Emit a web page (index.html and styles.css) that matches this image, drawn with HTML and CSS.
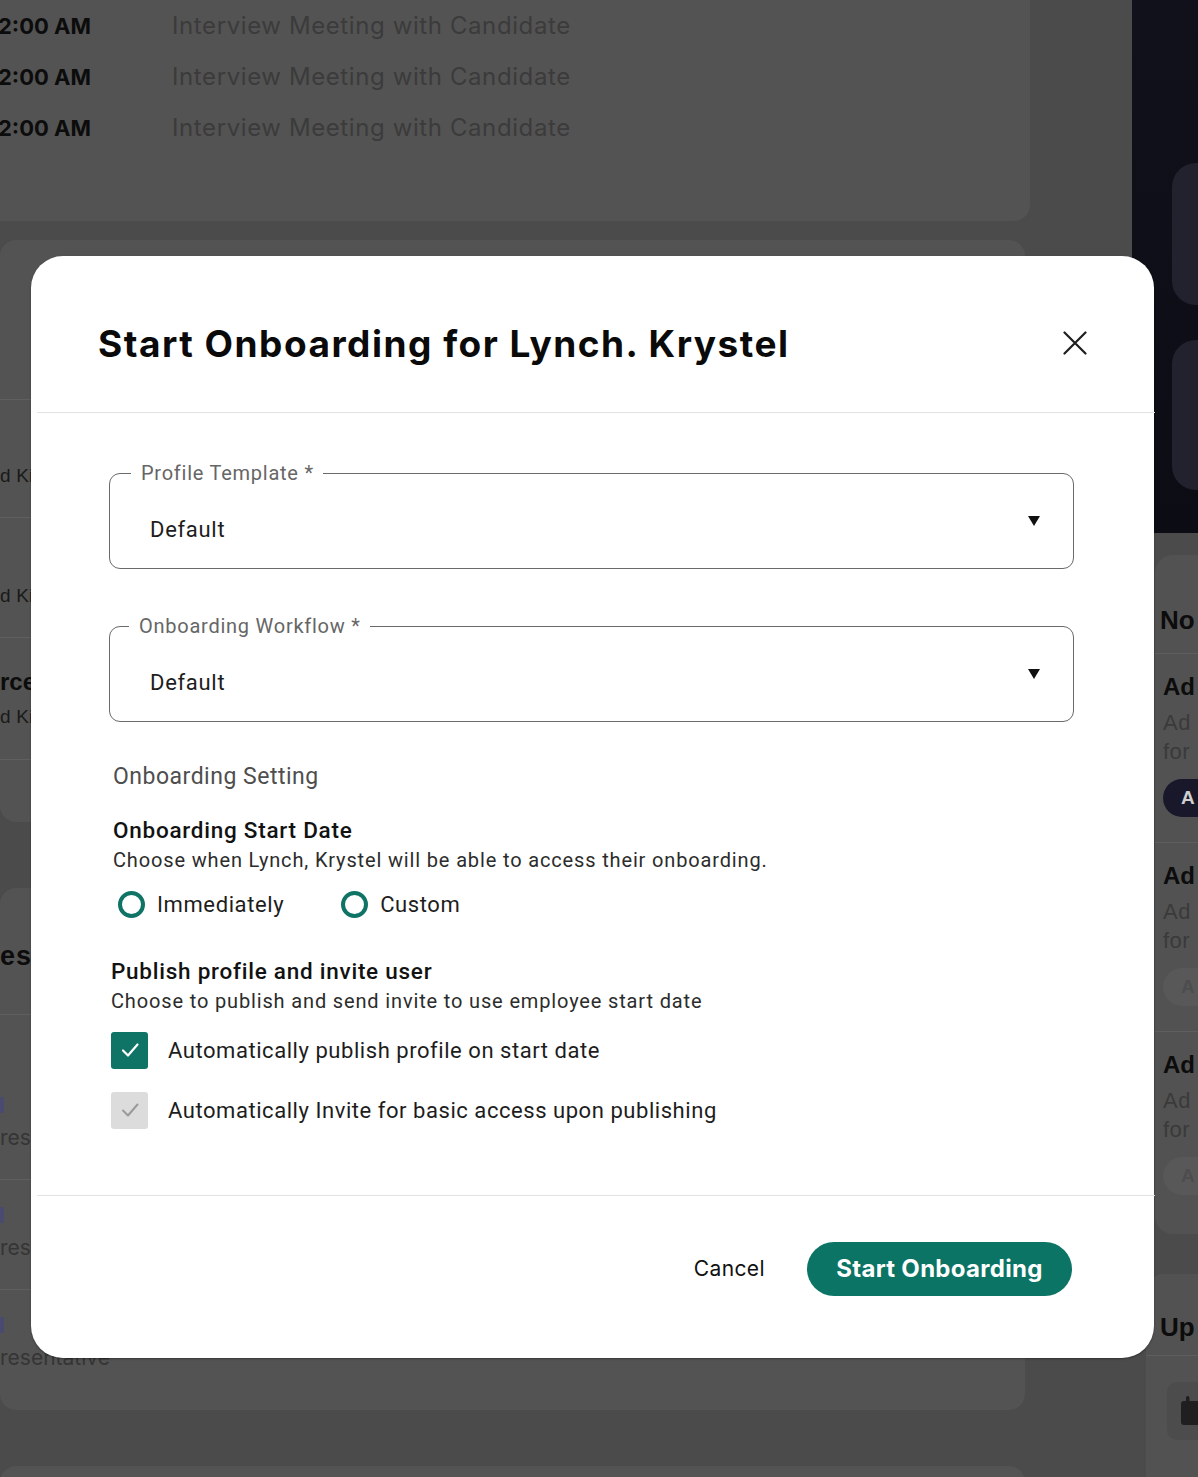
FILE: index.html
```html
<!DOCTYPE html>
<html lang="en">
<head>
<meta charset="utf-8">
<title>Start Onboarding</title>
<link rel="stylesheet" href="styles.css">
</head>
<body>
<div class="page">
  <div class="main">
    <section class="agenda">
      <div class="agenda-row"><span class="time">2:00 AM</span><span class="event">Interview Meeting with Candidate</span></div>
      <div class="agenda-row"><span class="time">2:00 AM</span><span class="event">Interview Meeting with Candidate</span></div>
      <div class="agenda-row"><span class="time">2:00 AM</span><span class="event">Interview Meeting with Candidate</span></div>
    </section>

    <section class="card card-a">
      <div class="card-head"></div>
      <div class="row r1"><div class="row-title"></div><div class="row-sub">d Ki</div></div>
      <div class="row r2"><div class="row-title"></div><div class="row-sub">d Ki</div></div>
      <div class="row r3"><div class="row-title">rce</div><div class="row-sub">d Ki</div></div>
    </section>

    <section class="card card-b">
      <div class="card-b-head"><span class="card-b-title">es</span></div>
      <div class="rep"><span class="marker"></span><span class="rep-sub">res</span></div>
      <div class="rep"><span class="marker"></span><span class="rep-sub">res</span></div>
      <div class="rep last"><span class="marker"></span><span class="rep-sub">resentative</span></div>
    </section>

    <section class="card card-c"></section>
  </div>

  <aside class="side">
    <div class="side-dark">
      <div class="side-btn"></div>
      <div class="side-btn tall"></div>
    </div>
    <div class="notes">
      <div class="notes-head">No</div>
      <div class="note">
        <div class="note-title">Ad</div>
        <div class="note-text">Ad<br>for</div>
        <div class="pill dark">A</div>
      </div>
      <div class="note">
        <div class="note-title">Ad</div>
        <div class="note-text">Ad<br>for</div>
        <div class="pill">A</div>
      </div>
      <div class="note last">
        <div class="note-title">Ad</div>
        <div class="note-text">Ad<br>for</div>
        <div class="pill">A</div>
      </div>
    </div>
    <div class="upcoming">
      <div class="notes-head up">Up</div>
      <div class="up-item">
        <svg class="cal" width="20" height="34" viewBox="0 0 20 34"><rect x="1" y="7" width="22" height="24" rx="3" fill="#1f1f1f"/><rect x="6" y="2" width="3.5" height="8" rx="1.7" fill="#1f1f1f"/></svg>
      </div>
    </div>
  </aside>
</div>

<div class="modal" role="dialog" aria-labelledby="modal-title">
  <header class="modal-head">
    <h1 id="modal-title" class="modal-title">Start Onboarding for Lynch. Krystel</h1>
    <button class="close" aria-label="Close">
      <svg width="24" height="24" viewBox="0 0 24 24"><path d="M1.5 1.5 L22.5 22.5 M22.5 1.5 L1.5 22.5" stroke="#1e1e1e" stroke-width="2.2" fill="none" stroke-linecap="round"/></svg>
    </button>
  </header>

  <div class="modal-body">
    <fieldset class="field">
      <legend class="field-label">Profile Template *</legend>
      <div class="field-inner"><span class="field-value">Default</span><span class="caret"></span></div>
    </fieldset>

    <fieldset class="field second">
      <legend class="field-label l2">Onboarding Workflow *</legend>
      <div class="field-inner"><span class="field-value">Default</span><span class="caret"></span></div>
    </fieldset>

    <div class="section-label">Onboarding Setting</div>

    <div class="group">
      <div class="group-title">Onboarding Start Date</div>
      <div class="group-desc">Choose when Lynch, Krystel will be able to access their onboarding.</div>
      <div class="radios">
        <label class="radio"><span class="radio-dot"></span>Immediately</label>
        <label class="radio"><span class="radio-dot"></span>Custom</label>
      </div>
    </div>

    <div class="group g2">
      <div class="group-title">Publish profile and invite user</div>
      <div class="group-desc">Choose to publish and send invite to use employee start date</div>
      <label class="check">
        <span class="box on"><svg width="22" height="22" viewBox="0 0 22 22"><path d="M4 11.5 L9 16.5 L18.5 5.5" stroke="#fff" stroke-width="2.2" fill="none" stroke-linecap="round" stroke-linejoin="round"/></svg></span>
        Automatically publish profile on start date
      </label>
      <label class="check c2">
        <span class="box off"><svg width="22" height="22" viewBox="0 0 22 22"><path d="M4 11.5 L9 16.5 L18.5 5.5" stroke="#9a9a9a" stroke-width="2" fill="none" stroke-linecap="round" stroke-linejoin="round"/></svg></span>
        Automatically Invite for basic access upon publishing
      </label>
    </div>
  </div>

  <footer class="modal-foot">
    <button class="btn-cancel">Cancel</button>
    <button class="btn-primary">Start Onboarding</button>
  </footer>
</div>
</body>
</html>
```

FILE: styles.css
```css
* { box-sizing: border-box; }
html, body { margin: 0; padding: 0; }
body {
  width: 1198px;
  height: 1477px;
  overflow: hidden;
  position: relative;
  background: #4b4b4b;
  font-family: Inter, "Liberation Sans", sans-serif;
}

/* ---------- dimmed background page ---------- */
.page {
  display: grid;
  grid-template-columns: 1132px 66px;
  height: 1477px;
}
.main { display: flex; flex-direction: column; }

.agenda {
  width: 1030px;
  height: 221px;
  background: #535353;
  border-radius: 0 0 16px 0;
}
.agenda-row {
  display: flex;
  align-items: center;
  height: 51px;
}
.time {
  width: 174px;
  font-weight: 700;
  font-size: 22px;
  color: #0c0c0c;
  margin-left: -2px;
}
.event {
  font-size: 24px;
  color: #3b3b3b;
  letter-spacing: 0.6px;
}

.card {
  width: 1025px;
  background: #535353;
  border-radius: 16px;
}
.card-a { margin-top: 19px; height: 582px; }
.card-head { height: 160px; border-bottom: 1px solid #5f5f5f; }
.row { height: 118px; border-bottom: 1px solid #5f5f5f; display: flex; flex-direction: column; font-family: "Liberation Sans", Arial, sans-serif; }
.row.r2 { height: 120px; }
.row.r3 { height: 122px; }
.row-title { height: 30px; font-weight: 700; font-size: 24px; color: #0c0c0c; line-height: 30px; }
.row-sub { font-size: 19px; color: #1a1a1a; line-height: 24px; letter-spacing: 0.2px; white-space: nowrap; }
.r1 .row-title { margin-top: 31px; }
.r1 .row-sub { margin-top: 3px; }
.r2 .row-title { margin-top: 33px; }
.r2 .row-sub { margin-top: 3px; }
.r3 .row-title { margin-top: 29px; }
.r3 .row-sub { margin-top: 8px; }

.card-b { margin-top: 66px; height: 522px; }
.card-b-head { height: 127px; border-bottom: 1px solid #5f5f5f; display: flex; align-items: center; padding-top: 10px; }
.card-b-title { font-family: "Liberation Sans", Arial, sans-serif; font-weight: 700; font-size: 27px; color: #0c0c0c; letter-spacing: 1px; }
.rep { height: 165px; border-bottom: 1px solid #5f5f5f; display: flex; flex-direction: column; padding-top: 82px; }
.rep + .rep { height: 110px; padding-top: 27px; }
.rep.last { border-bottom: none; height: 120px; }
.marker { width: 4px; height: 16px; background: #4a4a70; border-radius: 1px; }
.rep-sub { margin-top: 13px; font-size: 21px; color: #353535; line-height: 24px; }

.card-c { margin-top: 56px; height: 40px; }

/* right side */
.side { display: flex; flex-direction: column; }
.side-dark {
  height: 533px;
  background: linear-gradient(180deg, #11111b 0%, #0b0c14 100%);
  border-radius: 0 0 0 14px;
  padding: 163px 0 0 40px;
  display: flex;
  flex-direction: column;
  gap: 35px;
}
.side-btn { height: 142px; background: #22222e; border-radius: 24px 0 0 24px; }
.side-btn.tall { height: 150px; }

.notes {
  margin-top: 22px;
  margin-left: 23px;
  height: 679px;
  background: #525252;
  border-radius: 18px 0 0 18px;
  font-family: "Liberation Sans", Arial, sans-serif;
  overflow: hidden;
  white-space: nowrap;
}
.notes-head {
  height: 99px;
  border-bottom: 1px solid #5e5e5e;
  font-weight: 700;
  font-size: 26px;
  color: #0c0c0c;
  padding: 50px 0 0 5px;
  line-height: 30px;
}
.note { height: 189px; border-bottom: 1px solid #5e5e5e; padding: 17px 0 0 8px; }
.note.last { border-bottom: none; }
.note-title { font-weight: 700; font-size: 24px; color: #0c0c0c; line-height: 32px; }
.note-text { font-size: 22px; color: #3a3a3a; line-height: 29px; margin-top: 5px; letter-spacing: 0.5px; }
.pill {
  margin-top: 13px;
  height: 38px;
  width: 80px;
  border-radius: 19px;
  background: #585858;
  color: #4d4d4d;
  font-weight: 700;
  font-size: 19px;
  line-height: 38px;
  padding-left: 18px;
}
.pill.dark { background: #18182a; color: #cfcfcf; }

.upcoming {
  margin-top: 40px;
  margin-left: 14px;
  flex: 1;
  background: #525252;
  border-radius: 18px 0 0 0;
  font-family: "Liberation Sans", Arial, sans-serif;
  overflow: hidden;
}
.notes-head.up { height: 82px; padding: 38px 0 0 14px; }
.up-item {
  margin: 26px 0 0 21px;
  height: 58px;
  background: #4c4c4c;
  border-radius: 10px 0 0 10px;
  padding: 12px 0 0 13px;
}
.cal { display: block; }

/* ---------- modal ---------- */
.modal {
  position: absolute;
  left: 31px;
  top: 256px;
  width: 1123px;
  height: 1102px;
  background: #fff;
  border-radius: 32px;
  box-shadow: 0 1px 2px rgba(0,0,0,0.35);
  display: flex;
  flex-direction: column;
  font-family: Roboto, "Noto Sans", sans-serif;
  color: #1d1d1d;
}
.modal-head {
  height: 157px;
  margin-left: 6px;
  border-bottom: 1.5px solid #e2e2e2;
  display: flex;
  align-items: center;
  justify-content: space-between;
  padding: 18px 68px 0 61px;
  margin-right: -1px;
}
.modal-title {
  margin: 0;
  font-family: Inter, "Liberation Sans", sans-serif;
  font-weight: 700;
  font-size: 37px;
  letter-spacing: 1.5px;
  color: #0a0a0a;
}
.close {
  border: 0;
  background: none;
  padding: 0;
  width: 24px;
  height: 24px;
  cursor: pointer;
  display: flex;
}

.modal-body {
  flex: 1;
  padding: 48px 80px 0 78px;
  display: flex;
  flex-direction: column;
}
.field {
  margin: 0;
  padding: 0;
  border: 1.5px solid #6a6a6a;
  border-radius: 11px;
  min-width: 0;
}
.field.second { margin-top: 45px; }
.field-label {
  margin-left: 21px;
  padding: 0 9px 0 10px;
  font-size: 20px;
  line-height: 24px;
  color: #666;
  letter-spacing: 0.75px;
}
.field-label.l2 { margin-left: 19px; }
.field-inner {
  height: 83px;
  padding: 6px 33px 0 40px;
  display: flex;
  align-items: center;
  justify-content: space-between;
}
.field-value { font-size: 22px; color: #1d1d1d; letter-spacing: 0.7px; }
.caret {
  width: 0;
  height: 0;
  border-left: 6.5px solid transparent;
  border-right: 6.5px solid transparent;
  border-top: 10px solid #111;
  margin-bottom: 18px;
}

.section-label {
  margin-top: 40px;
  padding-left: 4px;
  font-size: 23px;
  line-height: 30px;
  color: #4e4e4e;
  letter-spacing: 0.5px;
}
.group { padding-left: 4px; margin-top: 23px; }
.group.g2 { padding-left: 2px; margin-top: 34px; }
.group-title {
  font-size: 22.5px;
  line-height: 30px;
  font-weight: 500;
  color: #121212;
  letter-spacing: 0.75px;
}
.group-desc {
  margin-top: 1px;
  font-size: 20px;
  line-height: 28px;
  color: #2c2c2c;
  letter-spacing: 0.85px;
}
.radios { display: flex; gap: 57px; margin-top: 12px; height: 36px; align-items: center; padding-left: 5px; }
.radio {
  display: flex;
  align-items: center;
  gap: 12px;
  font-size: 22px;
  color: #1d1d1d;
  letter-spacing: 0.6px;
}
.radio-dot {
  width: 27px;
  height: 27px;
  border-radius: 50%;
  border: 4.5px solid #0f7366;
  background: #fff;
}
.check {
  display: flex;
  align-items: center;
  gap: 20px;
  height: 40px;
  margin-top: 15px;
  font-size: 22px;
  color: #1d1d1d;
  letter-spacing: 0.55px;
}
.check.c2 { margin-top: 20px; }
.box {
  width: 37px;
  height: 37px;
  border-radius: 3px;
  display: flex;
  align-items: center;
  justify-content: center;
}
.box.on { background: #0f7366; }
.box.off { background: #dcdcdc; }

.modal-foot {
  height: 163px;
  margin-left: 6px;
  margin-right: -1px;
  border-top: 1.5px solid #e2e2e2;
  display: flex;
  align-items: center;
  justify-content: flex-end;
  gap: 42px;
  padding: 0 83px 17px 0;
}
.btn-cancel {
  border: 0;
  background: none;
  padding: 0;
  font-family: Inter, "Liberation Sans", sans-serif;
  font-size: 21px;
  letter-spacing: 0.4px;
  color: #111;
  cursor: pointer;
}
.btn-primary {
  width: 265px;
  height: 54px;
  border: 0;
  border-radius: 27px;
  background: #0b7464;
  color: #fff;
  font-family: Inter, "Liberation Sans", sans-serif;
  font-weight: 700;
  font-size: 24px;
  letter-spacing: 0.3px;
  cursor: pointer;
}
```
